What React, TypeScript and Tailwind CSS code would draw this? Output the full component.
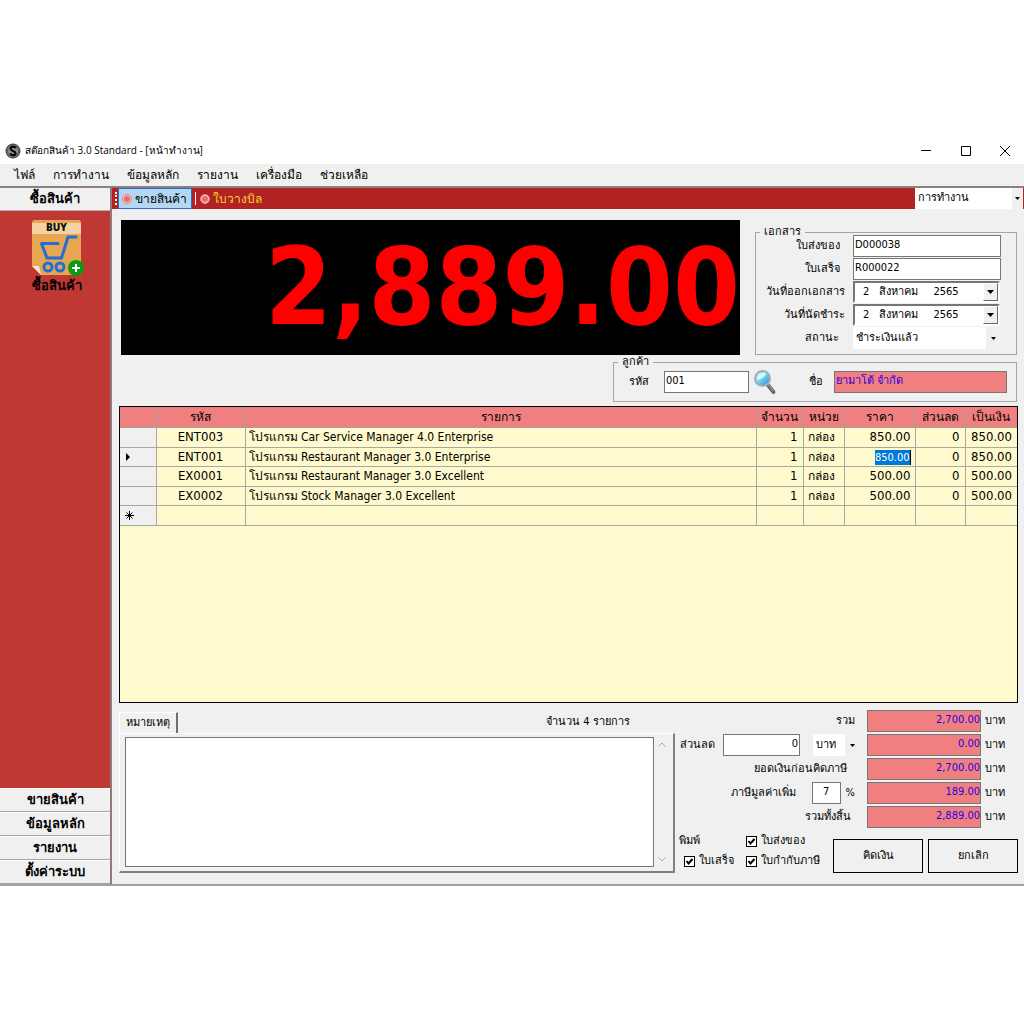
import type { FC, ReactNode } from "react";
import clsx from "clsx";

interface Item {
	code: string;
	name: string;
	qty: number;
	unit: string;
	price: string;
	discount: number;
	total: string;
}

const menus = ["ไฟล์", "การทำงาน", "ข้อมูลหลัก", "รายงาน", "เครื่องมือ", "ช่วยเหลือ"];
const sections = ["ขายสินค้า", "ข้อมูลหลัก", "รายงาน", "ตั้งค่าระบบ"];

const items: Item[] = [
	{ code: "ENT003", name: "โปรแกรม Car Service Manager 4.0 Enterprise", qty: 1, unit: "กล่อง", price: "850.00", discount: 0, total: "850.00" },
	{ code: "ENT001", name: "โปรแกรม Restaurant Manager 3.0 Enterprise", qty: 1, unit: "กล่อง", price: "850.00", discount: 0, total: "850.00" },
	{ code: "EX0001", name: "โปรแกรม Restaurant Manager 3.0 Excellent", qty: 1, unit: "กล่อง", price: "500.00", discount: 0, total: "500.00" },
	{ code: "EX0002", name: "โปรแกรม Stock Manager 3.0 Excellent", qty: 1, unit: "กล่อง", price: "500.00", discount: 0, total: "500.00" },
];

const activeCode = "ENT001";

const Arrow: FC = () => (
	<svg viewBox="0 0 5 3" className="h-[3px] w-[5px] fill-black">
		<path d="M0 0h5L2.5 3z" />
	</svg>
);

const BuyIcon: FC = () => (
	<svg viewBox="0 0 54 56" className="h-14 w-[54px]">
		<path d="M2 3a3 3 0 0 1 3-3h43a3 3 0 0 1 3 3v52H11L2 46z" fill="#e8a552" />
		<path d="M2 3h49v11H2z" fill="#f5d2a4" />
		<path d="M4 0h45l2 3H2z" fill="#e8a552" />
		<path d="M2 46h7l2 9z" fill="#fbe5c8" />
		<text x="26.500" y="11" textAnchor="middle" fontSize="10" fontWeight="800" fontFamily="Open Sans" fill="#111">BUY</text>
		<path d="M28 23.500H11.500L17 38h14.500L38 17h8" fill="none" stroke="#1f6fd6" strokeWidth="3" strokeLinecap="round" strokeLinejoin="round" />
		<circle cx="18" cy="47" r="4" fill="none" stroke="#1f6fd6" strokeWidth="3" />
		<circle cx="30" cy="47" r="4" fill="none" stroke="#1f6fd6" strokeWidth="3" />
		<circle cx="46" cy="48" r="8" fill="#0b9b12" />
		<path d="M46 44v8M42 48h8" stroke="#fff" strokeWidth="2" />
	</svg>
);

const AppIcon: FC = () => (
	<svg viewBox="0 0 16 16" className="size-4">
		<circle cx="8" cy="8" r="7" fill="#8c8c8c" stroke="#2b2b2b" />
		<circle cx="8" cy="8" r="5.500" fill="none" stroke="#555" />
		<path d="M10.800 5.200C10.300 3.200 5.600 3.100 5.600 5.800c0 2.500 5 1.800 5 4.400 0 2.500-4.700 2.400-5.400.2" fill="none" stroke="#000" strokeWidth="2" />
	</svg>
);

const SearchIcon: FC = () => (
	<svg viewBox="0 0 24 26" className="h-[26px] w-6">
		<defs>
			<linearGradient id="lens" x1="0" y1="0" x2="1" y2="1">
				<stop offset="0" stopColor="#d8f6ff" />
				<stop offset="0.500" stopColor="#6fd0f2" />
				<stop offset="1" stopColor="#1784bd" />
			</linearGradient>
		</defs>
		<path d="M15 16l5.500 7" stroke="#6b6b6b" strokeWidth="4" strokeLinecap="round" />
		<path d="M15 15l5.500 7" stroke="#a9a9a9" strokeWidth="1" />
		<circle cx="9.500" cy="9.500" r="7.500" fill="url(#lens)" stroke="#9fb0ba" strokeWidth="2" />
		<path d="M4 11C4 6 8 3 13 4C12 8 9 10 4 11z" fill="#f3fdff" opacity="0.800" />
	</svg>
);

const Radio: FC = () => (
	<svg viewBox="0 0 10 10" className="size-[10px] shrink-0">
		<circle cx="5" cy="5" r="4.500" fill="#f4c4c4" stroke="#e98080" />
		<circle cx="5" cy="5" r="3" fill="#e86a6a" />
	</svg>
);

const Group: FC<{ title: string; className: string; children: ReactNode }> = ({ title, className, children }) => (
	<fieldset className={clsx("mr-px border border-[#a5a5a5]", className)}>
		<legend className="ml-1 h-[14px] px-1 leading-[14px]">{title}</legend>
		{children}
	</fieldset>
);

const Combo: FC<{ label: string; value: string; className: string; arrow?: string }> = ({ label, value, className, arrow }) => (
	<div className={clsx("relative", className)}>
		<select aria-label={label} className="size-full appearance-none bg-transparent pl-[3px] outline-none">
			<option>{value}</option>
		</select>
		<span className={clsx("pointer-events-none absolute inset-y-0 right-0 flex items-center justify-center bg-[#f0f0f0]", arrow ?? "w-[15px]")}>
			<Arrow />
		</span>
	</div>
);

const DateInput: FC<{ id: string }> = ({ id }) => (
	<div className="flex h-[22px] w-[147px] border-2 border-t-[#767676] border-r-white border-b-white border-l-[#767676] bg-white">
		<input id={id} defaultValue="2   สิงหาคม     2565" className="w-0 flex-1 bg-transparent pl-2 whitespace-pre outline-none" />
		<button type="button" aria-label="เลือกวันที่" className="flex w-[15px] items-center justify-center border border-white border-r-[#696969] border-b-[#696969] bg-[#f0f0f0]">
			<svg viewBox="0 0 7 4" className="h-1 w-[7px]"><path d="M0 0h7L3.500 4z" /></svg>
		</button>
	</div>
);

const TextInput: FC<{ id: string; value: string; className: string }> = ({ id, value, className }) => (
	<input id={id} defaultValue={value} className={clsx("h-[22px] border border-[#767676] pb-1 outline-none", className)} />
);

const DocRow: FC<{ id: string; label: string; shift: string; children: ReactNode }> = ({ id, label, shift, children }) => (
	<div className="flex h-[22px] items-center">
		<label htmlFor={id} className={clsx("w-[97px] shrink-0 text-right", shift)}>{label}</label>
		{children}
	</div>
);

const TotalRow: FC<{ id: string; value: string; children: ReactNode }> = ({ id, value, children }) => (
	<div className="flex h-[22px] items-center justify-end whitespace-nowrap">
		{children}
		<TextInput id={id} value={value} className="w-[114px] bg-[#f08080] text-right text-[#2a00e0]" />
		<span className="ml-1 w-[33px]">บาท</span>
	</div>
);

const Check: FC<{ label: string }> = ({ label }) => (
	<label className="flex h-5 items-center gap-1 whitespace-nowrap">
		<span className="relative size-[11px]">
			<input type="checkbox" defaultChecked className="peer block size-[11px] appearance-none border border-black bg-white" />
			<svg viewBox="0 0 11 11" className="pointer-events-none absolute inset-0 hidden size-[11px] peer-checked:block">
				<path d="M2.500 5l2 2.500L8.500 3" fill="none" stroke="#000" strokeWidth="2" />
			</svg>
		</span>
		{label}
	</label>
);

const Sidebar: FC = () => (
	<aside className="flex w-28 shrink-0 flex-col border-r-2 border-[#8f7b7b] bg-[#c03834] text-[13px] font-bold">
		<button type="button" className="h-[23px] border-b border-[#bdb0b0] bg-[#f0f0f0]">ซื้อสินค้า</button>
		<div className="flex-1 pt-[9px]">
			<button type="button" className="mx-auto flex flex-col items-center pl-1">
				<BuyIcon />
				<span className="leading-5">ซื้อสินค้า</span>
			</button>
		</div>
		{sections.map((section) => (
			<button key={section} type="button" className="h-6 border-t border-b border-t-white border-b-[#a9a0a0] bg-[#f0f0f0]">
				{section}
			</button>
		))}
	</aside>
);

const ItemsTable: FC = () => (
	<div className="h-[297px] border border-black bg-[#fffacd]">
		<table className="w-full table-fixed border-collapse text-[13px] leading-[18px]">
			<colgroup>
				<col className="w-9" />
				<col className="w-[89px]" />
				<col />
				<col className="w-[47px]" />
				<col className="w-[41px]" />
				<col className="w-[71px]" />
				<col className="w-[50px]" />
				<col className="w-[52px]" />
			</colgroup>
			<thead>
				<tr className="h-5 bg-[#f08080] text-xs leading-[18px] *:border *:border-t-0 *:border-[#a8a09a] *:p-0 *:font-normal *:first:border-l-0 *:last:border-r-0">
					<th aria-label="แถว" />
					<th>รหัส</th>
					<th>รายการ</th>
					<th>จำนวน</th>
					<th>หน่วย</th>
					<th>ราคา</th>
					<th>ส่วนลด</th>
					<th>เป็นเงิน</th>
				</tr>
			</thead>
			<tbody className="[&_td]:border [&_td]:border-[#a8a8a0] [&_td]:py-0 [&_td:first-child]:border-l-0 [&_td:last-child]:border-r-0">
				{items.map((item) => (
					<tr key={item.code} className="odd:h-5 even:h-[19px]">
						<td className="bg-[#f0f0f0] px-1.5">
							{item.code === activeCode && (
								<svg viewBox="0 0 4 8" className="h-2 w-1"><path d="M0 0l4 4-4 4z" /></svg>
							)}
						</td>
						<td className="text-center">{item.code}</td>
						<td className="px-[3px] text-xs leading-[18px] whitespace-nowrap">{item.name}</td>
						<td className="px-[5px] text-right">{item.qty}</td>
						<td className="px-1 text-xs leading-[18px]">{item.unit}</td>
						<td className="px-1 text-right">
							{item.code === activeCode ? (
								<span className="inline-block h-[15px] border-r border-black bg-[#0078d7] align-middle text-[11px] leading-[15px] text-white">{item.price}</span>
							) : item.price}
						</td>
						<td className="px-[5px] text-right">{item.discount}</td>
						<td className="px-[5px] text-right">{item.total}</td>
					</tr>
				))}
				<tr className="h-5">
					<td className="bg-[#f0f0f0] px-[5px]">
						<svg viewBox="0 0 9 9" className="size-[9px]" stroke="#000">
							<path d="M4.500 0v9M0 4.500h9M1.500 1.500l6 6M7.500 1.500l-6 6" />
						</svg>
					</td>
					<td /><td /><td /><td /><td /><td /><td />
				</tr>
			</tbody>
		</table>
	</div>
);

const App: FC = () => (
	<div className="min-h-screen bg-white pt-[137px] font-['DejaVu_Sans_Condensed',sans-serif] text-[11px] text-black">
		<header className="flex h-[27px] items-center pl-[5px]">
			<AppIcon />
			<h1 className="ml-1 flex-1 font-['Open_Sans',sans-serif] text-[10px]">สต๊อกสินค้า 3.0 Standard - [หน้าทำงาน]</h1>
			<div className="flex [&_svg]:size-[10px]">
				<button type="button" aria-label="ย่อ" className="flex w-10 justify-center"><svg viewBox="0 0 10 10" stroke="#000"><path d="M0 4.500h10" /></svg></button>
				<button type="button" aria-label="ขยาย" className="flex w-10 justify-center"><svg viewBox="0 0 10 10" fill="none" stroke="#000"><path d="M.5.5h9v9h-9z" /></svg></button>
				<button type="button" aria-label="ปิด" className="flex w-[38px] justify-center"><svg viewBox="0 0 10 10" stroke="#000"><path d="M0 0l10 10M10 0L0 10" /></svg></button>
			</div>
		</header>
		<nav className="flex h-6 items-center gap-[18px] border-b-2 border-[#8c7f7f] bg-[#f0f0f0] pl-[14px] text-xs">
			{menus.map((menu) => <button key={menu} type="button">{menu}</button>)}
		</nav>
		<div className="flex border-b-2 border-[#a0a0a0] bg-[#f0f0f0]">
			<Sidebar />
			<main className="min-w-0 flex-1">
				<div className="flex h-[21px] bg-[#b22222] pl-[3px] text-xs">
					<div className="my-1 w-[3px] border-l-2 border-dotted border-white" />
					<button type="button" className="flex items-center gap-[3px] border border-[#2a6fc4] bg-[#b3d7f3] pr-1 pl-[3px]">
						<Radio />ขายสินค้า
					</button>
					<span className="my-1 ml-[3px] w-px bg-white" />
					<button type="button" className="flex flex-1 items-center gap-[3px] pl-1 text-[#f0d830]">
						<Radio />ใบวางบิล
					</button>
					<Combo label="หน้าทำงาน" value="การทำงาน" className="mr-px w-[108px] bg-white text-[11px]" arrow="w-[11px]" />
				</div>

				<div className="pt-[11px] pr-1.5 pb-[11px] pl-[7px]">
					<div className="flex pl-0.5">
						<output className="flex h-[135px] min-w-0 flex-1 items-center justify-end bg-black text-[107px] leading-none font-bold text-[#f00]">2,889.00</output>
						<Group title="เอกสาร" className="mt-[5px] ml-[15px] h-[130px] w-[262px]">
							<div className="-mt-1 flex flex-col gap-px">
								<DocRow id="delivery" label="ใบส่งของ" shift="pr-[13px]"><TextInput id="delivery" value="D000038" className="w-[148px] bg-white px-px" /></DocRow>
								<DocRow id="receipt" label="ใบเสร็จ" shift="pr-[13px]"><TextInput id="receipt" value="R000022" className="w-[148px] bg-white px-px" /></DocRow>
								<DocRow id="issued" label="วันที่ออกเอกสาร" shift="pr-2"><DateInput id="issued" /></DocRow>
								<DocRow id="due" label="วันที่นัดชำระ" shift="pr-2"><DateInput id="due" /></DocRow>
								<DocRow id="status" label="สถานะ" shift="pr-[14px]">
									<Combo label="สถานะ" value="ชำระเงินแล้ว" className="h-[22px] w-[148px] bg-white" />
								</DocRow>
							</div>
						</Group>
					</div>
					<div className="flex justify-end">
						<Group title="ลูกค้า" className="h-[47px] w-[404px]">
							<div className="flex items-center">
								<label htmlFor="customer" className="w-[50px] pl-[15px]">รหัส</label>
								<TextInput id="customer" value="001" className="w-[85px] bg-white px-px" />
								<button type="button" aria-label="ค้นหา" className="ml-1"><SearchIcon /></button>
								<label htmlFor="name" className="ml-8 w-[25px]">ชื่อ</label>
								<TextInput id="name" value="ยามาโต้ จำกัด" className="w-[173px] bg-[#f08080] px-px text-[#2a00e0]" />
							</div>
						</Group>
					</div>
					<div className="mt-1">
						<ItemsTable />
					</div>

					<div className="flex pt-[7px]">
						<section className="min-w-0 flex-1 pt-0.5">
							<div className="flex h-[21px]">
								<button type="button" className="w-[59px] border-t border-r-2 border-l border-t-white border-r-[#707070] border-l-white whitespace-nowrap">หมายเหตุ</button>
								<p className="ml-[368px] leading-5">จำนวน 4 รายการ</p>
							</div>
							<div className="flex h-[140px] border-t border-r-2 border-b-2 border-l border-t-white border-r-[#808080] border-b-[#808080] border-l-white pt-[3px] pr-1 pb-1 pl-[5px]">
								<textarea aria-label="หมายเหตุ" className="min-w-0 flex-1 resize-none border border-[#767676] bg-white outline-none" />
								<div className="flex w-[15px] flex-col items-center justify-between py-[5px]">
									<svg viewBox="0 0 8 5" className="h-[5px] w-2" fill="none" stroke="#a8a8a8"><path d="M.5 4.500L4 1l3.500 3.500" /></svg>
									<svg viewBox="0 0 8 5" className="h-[5px] w-2" fill="none" stroke="#a8a8a8"><path d="M.5.5L4 4 7.500.5" /></svg>
								</div>
							</div>
						</section>

						<section className="w-[343px] shrink-0">
							<div className="flex flex-col gap-0.5">
								<TotalRow id="sum" value="2,700.00"><label htmlFor="sum" className="mr-3">รวม</label></TotalRow>
								<TotalRow id="discounted" value="0.00">
									<label htmlFor="discount" className="mr-2">ส่วนลด</label>
									<TextInput id="discount" value="0" className="w-[77px] bg-white px-px text-right" />
									<Combo label="หน่วยส่วนลด" value="บาท" className="mr-[7px] ml-[13px] h-[22px] w-[47px] bg-white" />
								</TotalRow>
								<TotalRow id="beforeTax" value="2,700.00"><label htmlFor="beforeTax" className="mr-5">ยอดเงินก่อนคิดภาษี</label></TotalRow>
								<TotalRow id="tax" value="189.00">
									<label htmlFor="rate" className="mr-4">ภาษีมูลค่าเพิ่ม</label>
									<TextInput id="rate" value="7" className="w-[29px] bg-white text-center" />
									<span className="mr-3 ml-[5px]">%</span>
								</TotalRow>
								<TotalRow id="grand" value="2,889.00"><label htmlFor="grand" className="mr-4">รวมทั้งสิ้น</label></TotalRow>
							</div>
							<div className="mt-[3px] flex">
								<div className="grid flex-1 grid-cols-[62px_1fr] content-start pl-[9px]">
									<span className="-ml-[5px] leading-5">พิมพ์</span>
									<Check label="ใบส่งของ" />
									<Check label="ใบเสร็จ" />
									<Check label="ใบกำกับภาษี" />
								</div>
								<div className="mt-2 flex gap-[5px]">
									<button type="button" className="h-[34px] w-[90px] border border-black">คิดเงิน</button>
									<button type="button" className="h-[34px] w-[90px] border border-black">ยกเลิก</button>
								</div>
							</div>
						</section>
					</div>
				</div>
			</main>
		</div>
	</div>
);

export default App;
